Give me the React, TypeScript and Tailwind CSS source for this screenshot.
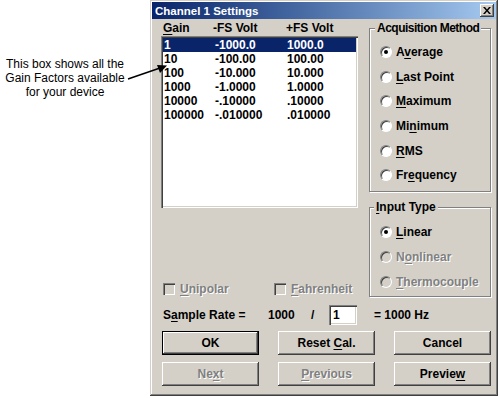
import React from "react";

const raised =
  "bg-[#d4d0c8] shadow-[inset_-1px_-1px_#404040,inset_1px_1px_#fff,inset_-2px_-2px_#808080,inset_2px_2px_#d4d0c8]";
const sunken =
  "bg-white shadow-[inset_1px_1px_#808080,inset_2px_2px_#404040,inset_-1px_-1px_#fff,inset_-2px_-2px_#d4d0c8]";
const dim = "text-[#808080] [text-shadow:1px_1px_0_#fff]";

const rows = [
  ["1", "-1000.0", "1000.0"],
  ["10", "-100.00", "100.00"],
  ["100", "-10.000", "10.000"],
  ["1000", "-1.0000", "1.0000"],
  ["10000", "-.10000", ".10000"],
  ["100000", "-.010000", ".010000"],
];

// underlined mnemonic letter
function U({ children }: { children: React.ReactNode }) {
  return <span className="underline underline-offset-[2px]">{children}</span>;
}

function Radio({
  checked,
  disabled,
  children,
}: {
  checked?: boolean;
  disabled?: boolean;
  children: React.ReactNode;
}) {
  return (
    <div className="flex items-center h-[14px]">
      <span
        className={
          "w-[12px] h-[12px] rounded-full border border-t-[#808080] border-l-[#808080] border-r-white border-b-white shadow-[inset_1px_1px_#404040] flex items-center justify-center " +
          (disabled ? "bg-[#d4d0c8]" : "bg-white")
        }
      >
        {checked && <span className="w-[4px] h-[4px] rounded-full bg-black" />}
      </span>
      <span className={"ml-[4px] whitespace-nowrap " + (disabled ? dim : "")}>{children}</span>
    </div>
  );
}

function Check({ children }: { children: React.ReactNode }) {
  return (
    <div className="flex items-center h-[14px]">
      <span className="w-[12px] h-[12px] bg-[#d4d0c8] shadow-[inset_1px_1px_#808080,inset_2px_2px_#404040,inset_-1px_-1px_#fff,inset_-2px_-2px_#d4d0c8]" />
      <span className={"ml-[5px] " + dim}>{children}</span>
    </div>
  );
}

function Btn({
  children,
  def,
  disabled,
}: {
  children: React.ReactNode;
  def?: boolean;
  disabled?: boolean;
}) {
  return (
    <div
      className={
        "h-[24px] flex items-center justify-center " +
        (def ? "border border-black " : "") +
        raised +
        (disabled ? " " + dim : "")
      }
    >
      <span className="whitespace-pre">{children}</span>
    </div>
  );
}

export default function App() {
  return (
    <div
      className="relative w-[500px] h-[398px] bg-white flex overflow-hidden"
      style={{ fontFamily: '"Liberation Sans", Arial, sans-serif' }}
    >
      {/* callout on the left */}
      <div className="w-[150px] shrink-0">
        <div className="w-[130px] pt-[57px] text-center text-[12px] leading-[14px] text-black">
          This box shows all the
          <br />
          Gain Factors available
          <br />
          for your device
        </div>
      </div>

      {/* dialog */}
      <div className="w-[348px] h-[396px] p-[2px] bg-[#d4d0c8] shadow-[inset_-1px_-1px_#404040,inset_1px_1px_#d4d0c8,inset_-2px_-2px_#808080,inset_2px_2px_#fff] flex flex-col text-[12px] font-bold text-black leading-[14px]">
        <div className="h-[17px] bg-linear-to-r from-[#0a246a] to-[#a6caf0] flex items-center justify-between pl-[3px] pr-[2px]">
          <span className="text-white text-[11.5px]">Channel 1 Settings</span>
          <span className={"w-[14px] h-[13px] flex items-center justify-center " + raised}>
            <svg width="8" height="7" viewBox="0 0 8 7">
              <path d="M0 0h2l2 2.5L6 0h2L5 3.5 8 7H6L4 4.5 2 7H0l3-3.5z" fill="#000" />
            </svg>
          </span>
        </div>

        <div className="flex flex-col pl-[9px] pr-[5px]">
          <div className="flex h-[278px]">
            {/* gain list column */}
            <div className="w-[197px] flex flex-col">
              <div className="mt-[2px] h-[14px] grid grid-cols-[50px_73px_1fr] pl-[2px]">
                <span>
                  <U>G</U>ain
                </span>
                <span>-FS Volt</span>
                <span>+FS Volt</span>
              </div>
              <div className={"mt-[1px] h-[172px] p-[2px] " + sunken}>
                {rows.map((r, i) => (
                  <div
                    key={r[0]}
                    className={
                      "h-[14px] grid grid-cols-[51px_72px_1fr] pl-[1px] " +
                      (i === 0 ? "bg-[#0a246a] text-white" : "")
                    }
                  >
                    <span>{r[0]}</span>
                    <span>{r[1]}</span>
                    <span>{r[2]}</span>
                  </div>
                ))}
              </div>
              <div className="mt-auto mb-[1px] flex pl-[2px]">
                <div className="w-[111px]">
                  <Check>
                    <U>U</U>nipolar
                  </Check>
                </div>
                <Check>
                  <U>F</U>ahrenheit
                </Check>
              </div>
            </div>

            {/* option groups */}
            <div className="ml-[11px] w-[122px] pt-[2px] flex flex-col">
              <fieldset className="h-[172px] border border-[#808080] shadow-[inset_1px_1px_#fff,1px_1px_#fff]">
                <legend className="ml-[5px] px-[2px] bg-[#d4d0c8] whitespace-nowrap tracking-[-0.5px]">
                  Acquisition Method
                </legend>
                <div className="flex flex-col gap-[10.7px] mt-[10px] pl-[10px]">
                  <Radio checked>
                    A<U>v</U>erage
                  </Radio>
                  <Radio>
                    <U>L</U>ast Point
                  </Radio>
                  <Radio>
                    <U>M</U>aximum
                  </Radio>
                  <Radio>
                    Mi<U>n</U>imum
                  </Radio>
                  <Radio>
                    <U>R</U>MS
                  </Radio>
                  <Radio>
                    Fr<U>e</U>quency
                  </Radio>
                </div>
              </fieldset>
              <fieldset className="mt-[8px] h-[97px] border border-[#808080] shadow-[inset_1px_1px_#fff,1px_1px_#fff]">
                <legend className="ml-[4px] px-[2px] bg-[#d4d0c8]">
                  <U>I</U>nput Type
                </legend>
                <div className="flex flex-col gap-[11px] mt-[11px] pl-[10px]">
                  <Radio checked>
                    <U>L</U>inear
                  </Radio>
                  <Radio disabled>
                    N<U>o</U>nlinear
                  </Radio>
                  <Radio disabled>
                    <U>T</U>hermocouple
                  </Radio>
                </div>
              </fieldset>
            </div>
          </div>

          {/* sample rate */}
          <div className="mt-[8px] h-[20px] flex items-center pl-[2px]">
            <span className="w-[105px]">
              S<U>a</U>mple Rate =
            </span>
            <span className="w-[43px]">1000</span>
            <span className="w-[18px]">/</span>
            <span className={"w-[28px] h-[20px] pl-[4px] flex items-center " + sunken}>1</span>
            <span className="ml-[17px]">= 1000 Hz</span>
          </div>

          {/* buttons */}
          <div className="mt-[6px] grid grid-cols-3 gap-x-[19px] gap-y-[7px] pl-[1px]">
            <Btn def>OK</Btn>
            <Btn>
              Reset <U>C</U>al.
            </Btn>
            <Btn>Cancel</Btn>
            <Btn disabled>
              Ne<U>x</U>t
            </Btn>
            <Btn disabled>
              <U>P</U>revious
            </Btn>
            <Btn>
              Previe<U>w</U>
            </Btn>
          </div>
        </div>
      </div>

      {/* callout arrow pointing into the list */}
      <svg className="absolute left-0 top-0 pointer-events-none" width="500" height="398">
        <line x1="128" y1="79" x2="160" y2="68" stroke="#000" strokeWidth="1.5" />
        <polygon points="167,65.5 157,65 160,73" fill="#000" />
      </svg>
    </div>
  );
}
